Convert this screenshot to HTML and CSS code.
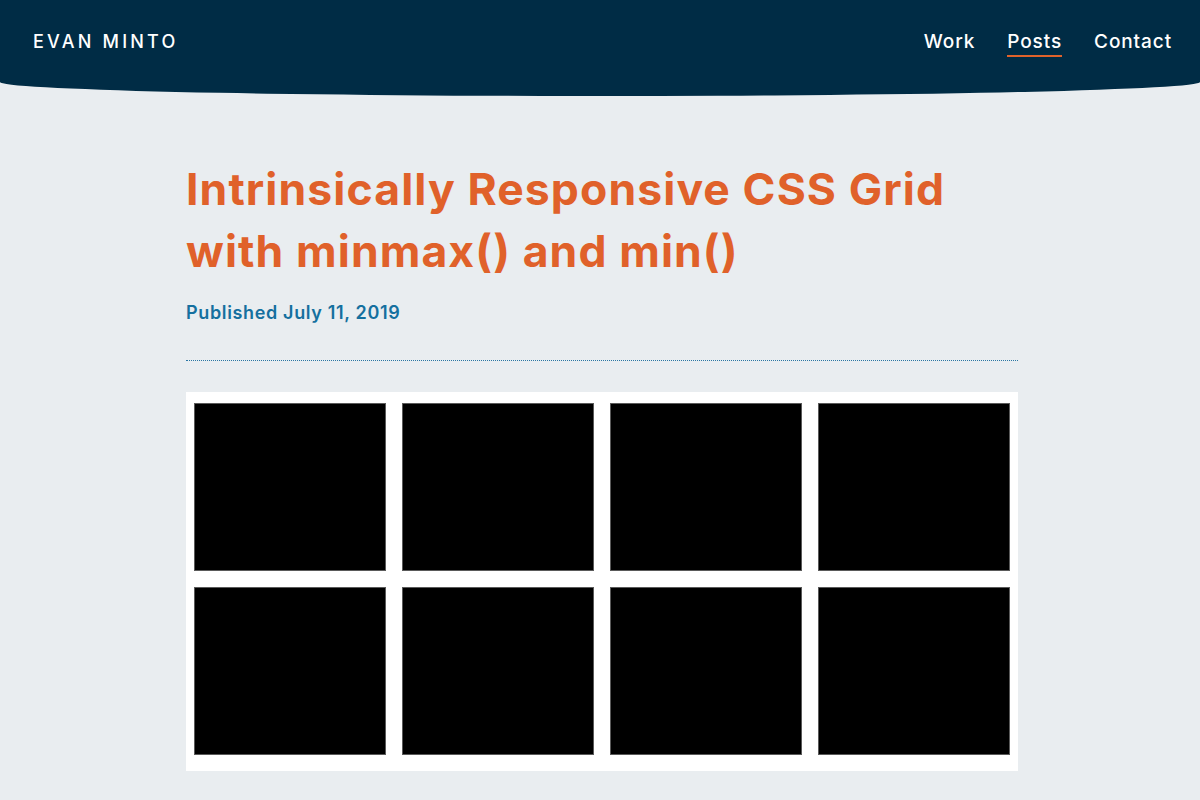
FILE: index.html
```html
<!DOCTYPE html>
<html lang="en">
<head>
<meta charset="utf-8">
<title>Intrinsically Responsive CSS Grid with minmax() and min()</title>
<link rel="stylesheet" href="styles.css">
</head>
<body>
<header class="site-header">
  <a class="brand" href="#">EVAN MINTO</a>
  <nav class="nav">
    <a class="nav-link" href="#">Work</a>
    <a class="nav-link is-active" href="#">Posts</a>
    <a class="nav-link" href="#">Contact</a>
  </nav>
</header>
<main class="post">
  <h1 class="post-title">Intrinsically Responsive CSS Grid with minmax() and min()</h1>
  <p class="post-meta">Published July 11, 2019</p>
  <hr class="divider">
  <div class="demo">
    <div class="demo-grid">
      <div class="box"></div>
      <div class="box"></div>
      <div class="box"></div>
      <div class="box"></div>
      <div class="box"></div>
      <div class="box"></div>
      <div class="box"></div>
      <div class="box"></div>
    </div>
  </div>
</main>
</body>
</html>
```

FILE: styles.css
```css
html, body {
  margin: 0;
  padding: 0;
}
body {
  background: #e9edf0;
  font-family: Inter, "Noto Sans", sans-serif;
  height: 800px;
  overflow: hidden;
}
.site-header {
  background: #002c45;
  height: 96px;
  box-sizing: border-box;
  padding: 0 28px 14px 33px;
  display: flex;
  align-items: center;
  justify-content: space-between;
  border-radius: 0 0 50% 50% / 0 0 14px 14px;
}
.brand {
  color: #ffffff;
  text-decoration: none;
  font-size: 18px;
  font-weight: 500;
  letter-spacing: 3.2px;
}
.nav {
  display: flex;
  gap: 32px;
}
.nav-link {
  color: #ffffff;
  text-decoration: none;
  font-size: 19px;
  font-weight: 500;
  letter-spacing: 0.9px;
  padding: 4px 0 2px;
  border-bottom: 2px solid transparent;
}
.nav-link.is-active {
  border-bottom-color: #e0622b;
}
.post {
  width: 832px;
  margin: 0 0 0 186px;
  padding-top: 62px;
}
.post-title {
  margin: 0;
  color: #e0612a;
  font-size: 44.5px;
  line-height: 62px;
  font-weight: 700;
  letter-spacing: 1.1px;
}
.post-meta {
  margin: 19px 0 0;
  color: #15709f;
  font-size: 18px;
  font-weight: 600;
  line-height: 24px;
  letter-spacing: 0.65px;
}
.divider {
  margin: 35px 0 0;
  border: 0;
  border-top: 1px dotted #2a76a3;
  height: 0;
}
.demo {
  margin-top: 31px;
  background: #ffffff;
  padding: 11px 8px 16px;
}
.demo-grid {
  display: grid;
  grid-template-columns: repeat(4, 1fr);
  gap: 16px;
}
.box {
  height: 168px;
  box-sizing: border-box;
  background: #000000;
  border: 1px solid #5a5a5a;
}
```
